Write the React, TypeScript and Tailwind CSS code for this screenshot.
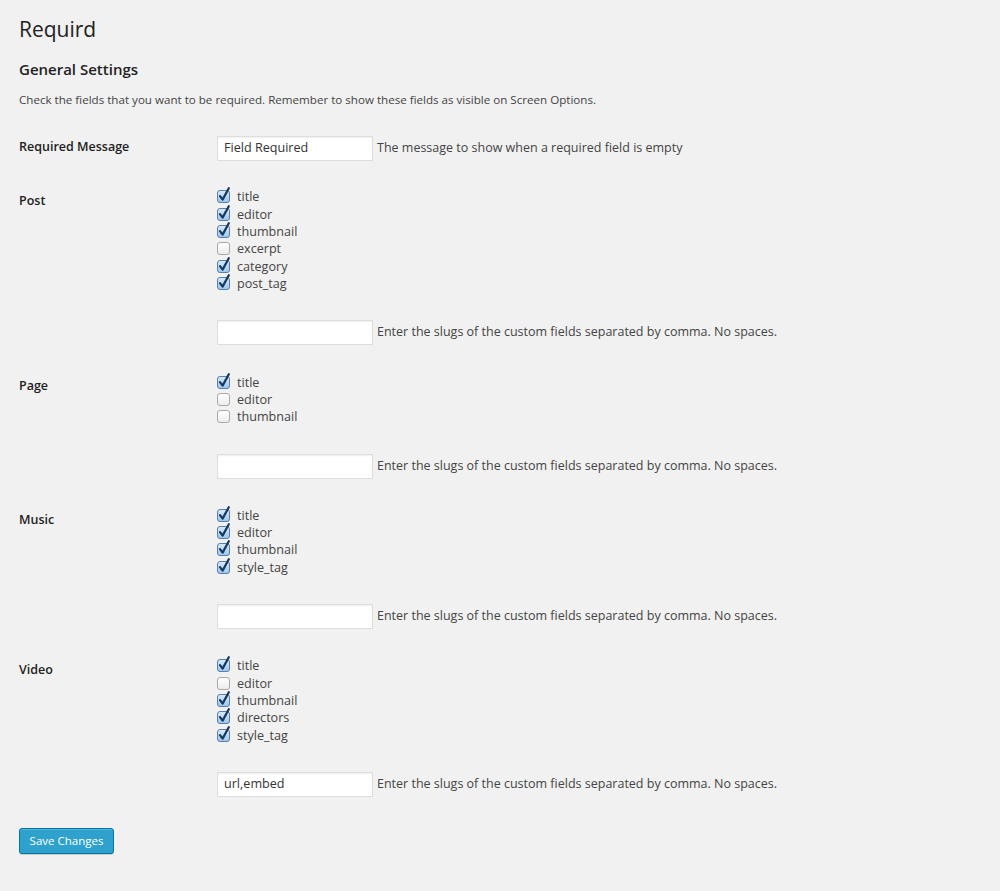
import React from "react";

type Item = { label: string; checked: boolean };

function Check({ checked }: { checked: boolean }) {
  return (
    <svg width="14" height="16" viewBox="0 0 14 16" className="shrink-0">
      <defs>
        <linearGradient id="cbg" x1="0" y1="0" x2="0" y2="1">
          <stop offset="0" stopColor="#d9ebfb" />
          <stop offset="1" stopColor="#9cc6ee" />
        </linearGradient>
        <linearGradient id="ubg" x1="0" y1="0" x2="0" y2="1">
          <stop offset="0" stopColor="#ffffff" />
          <stop offset="1" stopColor="#ececec" />
        </linearGradient>
      </defs>
      {checked ? (
        <>
          <rect x="0.5" y="3.5" width="12" height="12" rx="2.5" fill="url(#cbg)" stroke="#5a7fa8" />
          <path d="M3 9.2 L5.6 12.6 L11.8 1.2" fill="none" stroke="#17385f" strokeWidth="2.2" strokeLinecap="round" strokeLinejoin="round" />
        </>
      ) : (
        <rect x="0.5" y="3.5" width="12" height="12" rx="2.5" fill="url(#ubg)" stroke="#a9a9a9" />
      )}
    </svg>
  );
}

function CheckList({ items }: { items: Item[] }) {
  return (
    <div className="flex flex-col">
      {items.map((it) => (
        <div key={it.label} className="flex items-center h-[17.4px]">
          <div className="w-[20px] -mt-[3px]">
            <Check checked={it.checked} />
          </div>
          <span className="text-[12.6px] leading-[17px] text-[#444]">{it.label}</span>
        </div>
      ))}
    </div>
  );
}

function TextInput({ value }: { value: string }) {
  return (
    <div className="w-[156px] h-[25px] bg-white border border-[#dddddd] shadow-[inset_0_1px_2px_rgba(0,0,0,0.07)] flex items-center px-[6px] text-[12.6px] text-[#333]">
      {value}
    </div>
  );
}

const SLUG_DESC = "Enter the slugs of the custom fields separated by comma. No spaces.";

function Section({ title, items, value }: { title: string; items: Item[]; value: string }) {
  return (
    <div className="grid grid-cols-[198px_1fr]">
      <div className="pt-[4px] text-[12.5px] leading-[17.4px] font-semibold text-[#222]">{title}</div>
      <div className="flex flex-col">
        <CheckList items={items} />
        <div className="mt-[28px] flex items-center gap-[4px]">
          <TextInput value={value} />
          <span className="text-[12.5px] text-[#444]">{SLUG_DESC}</span>
        </div>
      </div>
    </div>
  );
}

const c = (label: string, checked: boolean): Item => ({ label, checked });

export default function App() {
  return (
    <div
      className="min-h-[891px] w-full bg-[#f1f1f1] pl-[19px] pt-[14px] text-[#444]"
      style={{ fontFamily: '"Open Sans", "Noto Sans", sans-serif' }}
    >
      <h1 className="text-[21px] leading-[30px] text-[#222] font-normal">Requird</h1>
      <h3 className="mt-[14px] text-[15px] leading-[22px] font-semibold text-[#222]">General Settings</h3>
      <p className="mt-[11px] text-[11.6px] leading-[18px] text-[#444]">
        Check the fields that you want to be required. Remember to show these fields as visible on Screen Options.
      </p>

      <div className="mt-[27px] grid grid-cols-[198px_1fr]">
        <div className="flex items-center pb-[2px] text-[12.5px] font-semibold text-[#222]">Required Message</div>
        <div className="flex items-center gap-[4px]">
          <TextInput value="Field Required" />
          <span className="text-[12.5px] text-[#444]">The message to show when a required field is empty</span>
        </div>
      </div>

      <div className="mt-[27px] flex flex-col gap-[28px]">
        <Section
          title="Post"
          value=""
          items={[c("title", true), c("editor", true), c("thumbnail", true), c("excerpt", false), c("category", true), c("post_tag", true)]}
        />
        <Section title="Page" value="" items={[c("title", true), c("editor", false), c("thumbnail", false)]} />
        <Section
          title="Music"
          value=""
          items={[c("title", true), c("editor", true), c("thumbnail", true), c("style_tag", true)]}
        />
        <Section
          title="Video"
          value="url,embed"
          items={[c("title", true), c("editor", false), c("thumbnail", true), c("directors", true), c("style_tag", true)]}
        />
      </div>

      <button className="mt-[31px] h-[26px] w-[95px] rounded-[3px] border border-[#0074a2] bg-[#2ea2cc] text-[11.5px] text-white shadow-[inset_0_1px_0_rgba(120,200,230,0.5),0_1px_0_rgba(0,0,0,0.15)]">
        Save Changes
      </button>
    </div>
  );
}
